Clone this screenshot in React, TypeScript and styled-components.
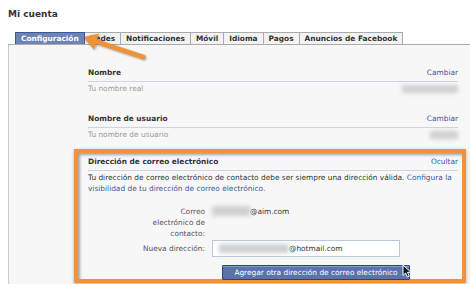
import React from "react";
import styled, { createGlobalStyle } from "styled-components";

const GlobalStyle = createGlobalStyle`
  html, body {
    margin: 0;
    padding: 0;
    background: #ffffff;
  }
  body {
    font-family: "DejaVu Sans", Verdana, sans-serif;
    font-size: 7.4px;
    color: #333333;
  }
`;

const Page = styled.div`
  position: relative;
  width: 470px;
  height: 284px;
  overflow: hidden;
  padding-left: 8px;
  box-sizing: border-box;
`;

const Title = styled.h1`
  margin: 0;
  padding-top: 8px;
  font-size: 9px;
  line-height: 12px;
  font-weight: bold;
  color: #333333;
`;

const TabBar = styled.div`
  display: flex;
  margin-top: 12px;
  padding-left: 7px;
  border-bottom: 1px solid #aaaaaa;
`;

const Tab = styled.div<{ $active?: boolean }>`
  height: 11px;
  line-height: 11px;
  padding: 0 5px;
  font-weight: bold;
  white-space: nowrap;
  border: 1px solid ${(p) => (p.$active ? "#3b5998" : "#aaaaaa")};
  border-bottom: none;
  margin-right: -1px;
  background: ${(p) => (p.$active ? "#6d84b4" : "#f2f2f2")};
  color: ${(p) => (p.$active ? "#ffffff" : "#333333")};
  position: relative;
  z-index: ${(p) => (p.$active ? 1 : 0)};
`;

const Panel = styled.div`
  background: #f7f7f7;
  border-left: 1px solid #cccccc;
  height: 260px;
  padding: 22px 12px 0 79px;
`;

const Setting = styled.div`
  margin-bottom: 19px;
`;

const SettingHeader = styled.div`
  display: flex;
  justify-content: space-between;
  align-items: baseline;
  line-height: 11px;
  padding-bottom: 3px;
  border-bottom: 1px solid #ccd3e3;
`;

const HeaderLabel = styled.span`
  font-weight: bold;
  color: #333333;
`;

const Link = styled.a`
  color: #3b5998;
  text-decoration: none;
  cursor: pointer;
`;

const SettingRow = styled.div`
  display: flex;
  justify-content: space-between;
  align-items: center;
  margin-top: 2px;
  line-height: 10px;
  color: #999999;
`;

const Blur = styled.span<{ $w: number; $h?: number }>`
  display: inline-block;
  flex-shrink: 0;
  width: ${(p) => p.$w}px;
  height: ${(p) => p.$h ?? 8}px;
  background: #cfcfcf;
  filter: blur(2px);
  vertical-align: middle;
`;

const Highlight = styled.div`
  margin: -10px -8px 0 -14px;
  padding: 3px 4px 0 10px;
  border: 4px solid #f3923c;
  box-shadow: inset 2px 2px 3px rgba(0, 0, 0, 0.35), 0 1px 3px rgba(0, 0, 0, 0.3);
  height: 134px;
  box-sizing: border-box;
`;

const Description = styled.p`
  margin: 2px 0 0;
  line-height: 10.5px;
  color: #333333;
`;

const Form = styled.div`
  display: grid;
  grid-template-columns: 70px 1fr;
  column-gap: 7px;
  margin: 12px 0 0 47px;
  line-height: 11px;
`;

const FieldLabel = styled.div<{ $nowrap?: boolean }>`
  text-align: right;
  color: #555555;
  white-space: ${(p) => (p.$nowrap ? "nowrap" : "normal")};
  align-self: ${(p) => (p.$nowrap ? "center" : "start")};
  max-width: ${(p) => (p.$nowrap ? "none" : "60px")};
  justify-self: end;
`;

const FieldValue = styled.div`
  color: #333333;
  display: flex;
  align-items: flex-start;
  line-height: 11px;
`;

const Input = styled.div`
  width: 188px;
  height: 17px;
  box-sizing: border-box;
  margin-top: 1px;
  background: #ffffff;
  border: 1px solid #bdc7d8;
  display: flex;
  align-items: center;
  padding-left: 6px;
  color: #333333;
`;

const Button = styled.button`
  grid-column: 2;
  justify-self: start;
  margin: 8px 0 0 10px;
  width: 188px;
  height: 15px;
  padding: 0;
  font-family: inherit;
  font-size: 7.4px;
  color: #ffffff;
  background: #5b74a8;
  border: 1px solid #29447e;
  box-shadow: inset 0 1px 0 #8a9cc2;
  border-radius: 1px;
`;

const ArrowOverlay = styled.svg`
  position: absolute;
  left: 78px;
  top: 24px;
  filter: drop-shadow(1px 1px 1px rgba(0, 0, 0, 0.35));
  pointer-events: none;
`;

const Cursor = styled.svg`
  position: absolute;
  left: 402px;
  top: 264px;
  pointer-events: none;
`;

const tabs = [
  "Configuración",
  "Redes",
  "Notificaciones",
  "Móvil",
  "Idioma",
  "Pagos",
  "Anuncios de Facebook",
];

export default function App() {
  return (
    <>
      <GlobalStyle />
      <Page>
        <Title>Mi cuenta</Title>
        <TabBar>
          {tabs.map((t, i) => (
            <Tab key={t} $active={i === 0}>
              {t}
            </Tab>
          ))}
        </TabBar>
        <Panel>
          <Setting>
            <SettingHeader>
              <HeaderLabel>Nombre</HeaderLabel>
              <Link>Cambiar</Link>
            </SettingHeader>
            <SettingRow>
              <span>Tu nombre real</span>
              <Blur $w={56} />
            </SettingRow>
          </Setting>
          <Setting>
            <SettingHeader>
              <HeaderLabel>Nombre de usuario</HeaderLabel>
              <Link>Cambiar</Link>
            </SettingHeader>
            <SettingRow>
              <span>Tu nombre de usuario</span>
              <Blur $w={28} />
            </SettingRow>
          </Setting>
          <Highlight>
            <SettingHeader>
              <HeaderLabel>Dirección de correo electrónico</HeaderLabel>
              <Link>Ocultar</Link>
            </SettingHeader>
            <Description>
              Tu dirección de correo electrónico de contacto debe ser siempre
              una dirección válida.{" "}
              <Link>
                Configura la visibilidad de tu dirección de correo electrónico.
              </Link>
            </Description>
            <Form>
              <FieldLabel>Correo electrónico de contacto:</FieldLabel>
              <FieldValue>
                <Blur $w={38} $h={10} />
                <span>@aim.com</span>
              </FieldValue>
              <FieldLabel $nowrap>Nueva dirección:</FieldLabel>
              <Input>
                <Blur $w={70} $h={9} />
                <span>@hotmail.com</span>
              </Input>
              <Button>Agregar otra dirección de correo electrónico</Button>
            </Form>
          </Highlight>
        </Panel>
        <ArrowOverlay width="72" height="40" viewBox="78 24 72 40">
          <line
            x1="143"
            y1="57"
            x2="93"
            y2="40.5"
            stroke="#f0923a"
            strokeWidth="5"
            strokeLinecap="round"
          />
          <polygon points="83,37 99,33.5 94,49.5" fill="#f0923a" />
        </ArrowOverlay>
        <Cursor width="11" height="14" viewBox="0 0 11 14">
          <path
            d="M1 1 L1 11.5 L3.6 9 L5.4 13 L7.2 12.2 L5.5 8.3 L9 8.3 Z"
            fill="#111111"
            stroke="#ffffff"
            strokeWidth="1"
            strokeLinejoin="round"
          />
        </Cursor>
      </Page>
    </>
  );
}
